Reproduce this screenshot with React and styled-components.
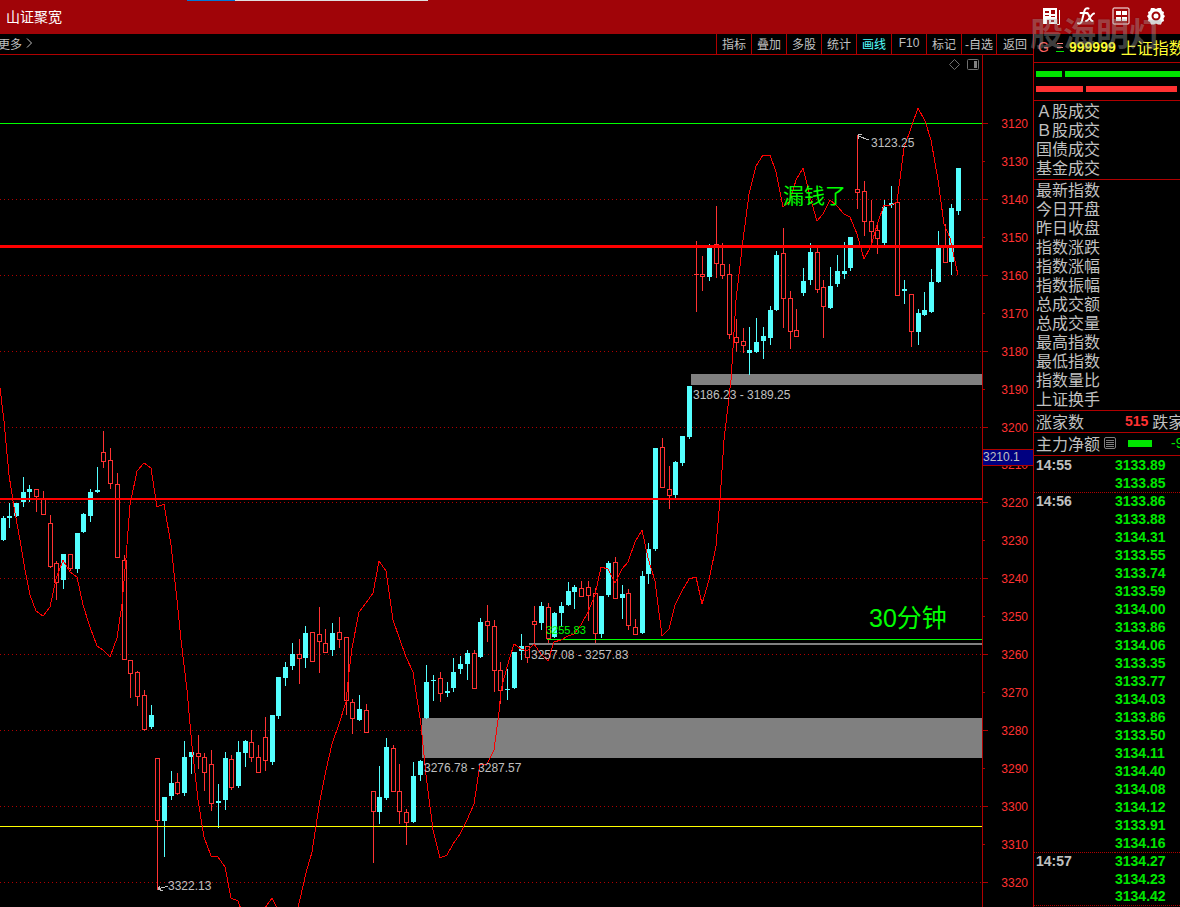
import React, { useState } from 'react';
import styled, { createGlobalStyle } from 'styled-components';

const tools = ['指标', '叠加', '多股', '统计', '画线', 'F10', '标记', '-自选', '返回'];

const volumeRows = ['Ａ股成交', 'Ｂ股成交', '国债成交', '基金成交'];

const indexRows = [
  '最新指数',
  '今日开盘',
  '昨日收盘',
  '指数涨跌',
  '指数涨幅',
  '指数振幅',
  '总成交额',
  '总成交量',
  '最高指数',
  '最低指数',
  '指数量比',
  '上证换手',
];

const ticks = [
  ['14:55', '3133.89'],
  ['', '3133.85'],
  ['14:56', '3133.86'],
  ['', '3133.88'],
  ['', '3134.31'],
  ['', '3133.55'],
  ['', '3133.74'],
  ['', '3133.59'],
  ['', '3134.00'],
  ['', '3133.86'],
  ['', '3134.06'],
  ['', '3133.35'],
  ['', '3133.77'],
  ['', '3134.03'],
  ['', '3133.86'],
  ['', '3133.50'],
  ['', '3134.11'],
  ['', '3134.40'],
  ['', '3134.08'],
  ['', '3134.12'],
  ['', '3133.91'],
  ['', '3134.16'],
  ['14:57', '3134.27'],
  ['', '3134.23'],
  ['', '3134.42'],
];

// [x, wick top, body top, body bottom, wick bottom, 1 = solid / 0 = hollow]
const candles = [
  [3, 516, 518, 540, 541, 1], [9, 503, 516, 518, 528, 1], [16, 503, 503, 516, 517, 1],
  [23, 477, 492, 502, 507, 1], [29, 485, 489, 492, 502, 1], [36, 489, 489, 497, 512, 0],
  [43, 491, 498, 515, 515, 0], [50, 515, 523, 567, 568, 0], [56, 561, 563, 583, 600, 0],
  [63, 554, 554, 580, 589, 1], [70, 554, 554, 569, 571, 0], [77, 533, 533, 569, 573, 1],
  [83, 513, 514, 532, 533, 1], [90, 489, 492, 516, 522, 1], [97, 467, 490, 492, 493, 1],
  [103, 431, 452, 462, 468, 0], [110, 448, 460, 484, 489, 0], [117, 473, 484, 558, 558, 0],
  [124, 555, 560, 660, 660, 0], [130, 660, 660, 674, 698, 0], [137, 671, 672, 697, 706, 0],
  [144, 690, 695, 730, 731, 0], [151, 705, 715, 727, 729, 1], [157, 758, 758, 821, 890, 0],
  [164, 797, 797, 821, 857, 1], [171, 771, 783, 796, 800, 1], [177, 773, 782, 794, 795, 0],
  [184, 741, 757, 793, 796, 1], [191, 752, 752, 757, 774, 1], [198, 735, 753, 757, 769, 0],
  [204, 753, 757, 773, 791, 0], [211, 750, 764, 804, 811, 0], [218, 784, 801, 803, 828, 1],
  [225, 752, 758, 800, 810, 1], [231, 755, 759, 788, 790, 0], [238, 741, 752, 786, 788, 1],
  [245, 740, 741, 753, 767, 1], [251, 730, 742, 758, 762, 0], [258, 745, 757, 773, 773, 0],
  [265, 717, 737, 761, 771, 0], [272, 715, 715, 762, 765, 1], [278, 677, 677, 716, 719, 1],
  [285, 662, 667, 678, 686, 1], [292, 643, 654, 666, 670, 1], [299, 639, 654, 659, 684, 0],
  [305, 626, 633, 658, 668, 1], [312, 632, 632, 662, 662, 0], [319, 607, 634, 642, 673, 0],
  [325, 629, 643, 653, 653, 0], [332, 623, 633, 650, 656, 1], [339, 617, 632, 640, 648, 0],
  [346, 637, 637, 701, 715, 0], [352, 699, 702, 719, 734, 0], [359, 695, 709, 720, 721, 1],
  [366, 704, 710, 733, 733, 0], [373, 791, 791, 812, 863, 0], [379, 766, 797, 812, 824, 1],
  [386, 738, 747, 798, 800, 1], [393, 745, 748, 792, 792, 0], [399, 764, 791, 812, 824, 0],
  [406, 809, 812, 823, 845, 0], [413, 762, 776, 822, 823, 1], [420, 760, 761, 775, 781, 1],
  [426, 665, 682, 718, 719, 1], [433, 675, 680, 681, 701, 1], [440, 672, 678, 694, 702, 0],
  [447, 682, 691, 693, 697, 1], [453, 658, 672, 688, 692, 1], [460, 656, 664, 669, 674, 1],
  [467, 650, 653, 664, 680, 1], [474, 650, 653, 689, 689, 0], [480, 618, 622, 657, 658, 1],
  [487, 605, 621, 626, 642, 0], [494, 620, 626, 671, 692, 0], [500, 662, 670, 691, 704, 0],
  [507, 669, 689, 690, 700, 1], [514, 652, 652, 688, 689, 1], [521, 634, 646, 651, 660, 1],
  [527, 646, 646, 658, 663, 0], [534, 606, 621, 625, 644, 0], [541, 602, 606, 623, 630, 1],
  [548, 603, 607, 639, 643, 0], [554, 612, 613, 637, 638, 1], [561, 602, 606, 613, 626, 1],
  [568, 582, 591, 605, 606, 1], [574, 585, 587, 592, 609, 1], [581, 581, 588, 597, 597, 0],
  [588, 581, 587, 596, 621, 0], [595, 588, 593, 634, 643, 0], [601, 596, 596, 634, 638, 1],
  [608, 561, 563, 595, 597, 1], [615, 557, 562, 599, 599, 0], [622, 585, 594, 598, 619, 1],
  [628, 589, 593, 626, 630, 0], [635, 619, 627, 635, 635, 0], [642, 571, 576, 633, 634, 1],
  [648, 543, 549, 574, 584, 1], [655, 448, 448, 549, 551, 1], [662, 438, 447, 488, 488, 0],
  [669, 466, 489, 496, 509, 0], [675, 461, 462, 495, 498, 1], [682, 436, 436, 463, 466, 1],
  [689, 386, 386, 437, 439, 1], [696, 241, 274, 275, 312, 0], [702, 256, 274, 277, 291, 0],
  [709, 244, 247, 277, 281, 1], [716, 206, 244, 264, 278, 0], [722, 243, 264, 276, 279, 0],
  [729, 264, 274, 335, 339, 0], [736, 319, 337, 343, 352, 0], [743, 328, 341, 346, 353, 0],
  [749, 327, 350, 353, 375, 1], [756, 318, 342, 352, 353, 1], [763, 327, 336, 341, 359, 1],
  [770, 306, 310, 338, 345, 1], [776, 251, 255, 310, 311, 1], [783, 228, 253, 299, 328, 0],
  [790, 291, 298, 332, 349, 0], [796, 309, 330, 337, 337, 0], [803, 268, 281, 293, 296, 1],
  [810, 243, 252, 280, 285, 1], [817, 248, 252, 290, 293, 0], [823, 280, 287, 307, 338, 0],
  [830, 267, 286, 308, 309, 1], [837, 255, 271, 284, 287, 1], [844, 242, 271, 274, 279, 1],
  [850, 237, 237, 268, 271, 1], [857, 135, 189, 193, 209, 0], [864, 181, 191, 222, 236, 0],
  [871, 200, 221, 232, 242, 0], [877, 223, 230, 239, 254, 0], [884, 200, 207, 243, 245, 1],
  [891, 186, 203, 205, 208, 1], [897, 202, 202, 296, 296, 0], [904, 280, 289, 291, 304, 1],
  [911, 294, 294, 332, 347, 0], [918, 309, 313, 332, 345, 1], [924, 292, 310, 315, 316, 1],
  [931, 269, 282, 312, 313, 1], [938, 231, 247, 282, 283, 1], [945, 224, 247, 263, 263, 0],
  [951, 204, 208, 262, 275, 1], [958, 168, 168, 211, 215, 1],
];

const indicator =
  '0,388 4,421 9,475 14,507 20,540 25,570 30,595 36,611 43,616 50,607 56,579 63,560 70,572 ' +
  '77,577 83,605 90,627 97,646 103,650 110,657 117,638 122,604 126,558 130,505 137,471 144,463 ' +
  '151,468 157,507 164,504 171,545 177,600 181,640 187,690 192,746 198,800 204,837 211,856 ' +
  '218,857 225,867 231,898 238,901 242,912 262,912 272,898 279,912 297,912 306,873 312,852 ' +
  '320,800 326,770 332,744 339,724 346,702 349,672 352,648 359,612 366,603 373,593 379,561 ' +
  '386,571 393,620 400,640 406,657 413,672 421,725 426,775 433,830 440,858 447,855 453,844 ' +
  '460,834 467,820 474,804 480,764 487,764 494,750 499,712 501,690 507,667 514,644 521,649 ' +
  '527,651 534,644 541,654 548,661 554,642 561,640 568,636 574,634 581,625 588,612 595,595 ' +
  '601,567 608,569 615,583 622,569 628,562 635,542 642,530 648,558 655,581 662,636 669,629 ' +
  '675,605 682,591 689,579 696,577 702,604 709,580 716,546 720,500 724,440 731,380 736,300 ' +
  '743,240 749,194 756,166 763,155 770,155 776,172 783,207 790,201 796,180 803,168 811,200 ' +
  '817,221 823,214 830,200 837,206 844,214 850,217 857,234 864,259 871,246 877,225 884,205 ' +
  '891,205 897,202 904,148 911,128 918,108 925,121 931,140 938,180 944,224 950,238 958,275';

const scale = Array.from({ length: 21 }, (_, i) => ({
  price: 3120 + i * 10,
  y: Math.round(123.4 + i * 37.95 - 0.5),
  major: i % 2 === 0,
}));

const Candle = ({ data }) => {
  const [x, high, top, bottom, low, solid] = data;
  const color = solid ? '#54ffff' : '#ff3232';
  const thin = bottom - top < 3;

  return (
    <g>
      <rect x={x} y={high} width="1" height={low - high} fill={color} />
      {solid || thin ? (
        <rect x={x - 2} y={top} width="5" height={bottom - top} fill={color} />
      ) : (
        <rect
          x={x - 1.5}
          y={top + 0.5}
          width="4"
          height={bottom - top - 1}
          fill="#000"
          stroke={color}
        />
      )}
    </g>
  );
};

const Chart = () => (
  <ChartSvg viewBox="0 55 1033 852" preserveAspectRatio="xMaxYMin slice">
    <g shapeRendering="crispEdges">
      {scale
        .filter(s => s.major && s.price > 3120)
        .map(s => (
          <line
            key={s.price}
            x1="0"
            x2="982"
            y1={s.y + 0.5}
            y2={s.y + 0.5}
            stroke="#b00000"
            strokeDasharray="1 3"
          />
        ))}

      <rect x="691" y="374" width="291" height="11" fill="#808080" />
      <rect x="422" y="718" width="560" height="40" fill="#808080" />

      {candles.map(c => (
        <Candle key={c[0]} data={c} />
      ))}

      <rect x="529" y="643" width="453" height="2" fill="#808080" />
      <rect x="547" y="639" width="435" height="1" fill="#00ff00" />
      <rect x="0" y="123" width="982" height="1" fill="#00ff00" />
      <rect x="0" y="245" width="982" height="3" fill="#ff0000" />
      <rect x="0" y="498" width="982" height="2" fill="#ff0000" />
      <rect x="0" y="826" width="982" height="1" fill="#ffff00" />
      <polyline points={indicator} fill="none" stroke="#ff0000" />

      <g stroke="#c0c0c0" fill="none">
        <path d="M869 140L858 136M862 134H858V139" />
        <path d="M168 886L158 889M160 886L158 889L163 891" />
      </g>
    </g>

    <Mark x="871" y="147">3123.25</Mark>
    <Mark x="168" y="890">3322.13</Mark>
    <Mark x="693" y="399">3186.23 - 3189.25</Mark>
    <Mark x="531" y="659">3257.08 - 3257.83</Mark>
    <Mark x="424" y="772">3276.78 - 3287.57</Mark>
    <Note x="546" y="634" $size={11}>3255.83</Note>
    <Note x="783" y="203" $size={21}>漏钱了</Note>
    <Note x="869" y="627" $size={25}>30分钟</Note>

    <g fill="none" stroke="#707070">
      <path d="M954.5 59.5L959.5 64.5L954.5 69.5L949.5 64.5Z" />
      <rect x="967.5" y="59.5" width="11" height="10" rx="1" />
      <rect x="974" y="61" width="3" height="7" fill="#808080" stroke="none" />
    </g>

    <g shapeRendering="crispEdges" fill="#b00000">
      <rect x="982" y="55" width="1" height="852" />
      {scale.map(s => (
        <rect key={s.price} x="983" y={s.y} width={s.major ? 5 : 2} height="1" />
      ))}
    </g>
    {scale.map(s => (
      <AxisLabel key={s.price} x="1028" y={s.y + 5}>
        {s.price}
      </AxisLabel>
    ))}
    <rect x="983" y="449" width="50" height="17" fill="#b00000" />
    <rect x="983" y="450" width="50" height="15" fill="#000080" />
    <Mark x="983" y="461">3210.1</Mark>
  </ChartSvg>
);

const SaveIcon = () => (
  <svg width="18" height="18" viewBox="0 0 18 18" fill="none">
    <path d="M1 1H15V17H1Z" fill="#fff" />
    <path d="M3 4H7V6H3ZM9 3H13V7H9ZM3 8H7V9H3ZM9 9H13V10H9ZM5 13H7V17H5ZM9 13H12V15H9Z" fill="#a00408" />
    <path d="M17.500 3V17.500H15" stroke="#fff" />
  </svg>
);

const GridIcon = () => (
  <svg width="18" height="18" viewBox="0 0 18 18" fill="none">
    <rect x="1" y="1" width="16" height="16" rx="1" stroke="#fff" />
    <path d="M4 4H9V8H4ZM10 4H15V8H10ZM4 10H9V14H4ZM10 10H15V14H10Z" fill="#fff" />
  </svg>
);

const FxIcon = () => (
  <svg width="18" height="18" viewBox="0 0 18 18" fill="none" stroke="#fff" strokeLinecap="round">
    <path d="M11.500 1.500C9.500 .8 8 1.500 7.400 4L5 13.500C4.500 15.800 3.200 17 1 16.200" strokeWidth="2" />
    <path d="M3.500 6H10.500" strokeWidth="2" />
    <path d="M10 6.500C12.500 6 12.500 14.500 15.500 14M17 6.500C14.500 6.500 12 14 9 14" strokeWidth="2" />
  </svg>
);

const GearIcon = () => (
  <svg width="18" height="18" viewBox="0 0 18 18" fill="none">
    <path
      fill="#fff"
      fillRule="evenodd"
      d="M4 1H7L9 2L11 1H14L15 4L17 5L16.500 7.500L18 9L16.500 11.500L17 14L15 15L14 17.500H11L9 16.500L7 17.500H4L3 15L1 14L1.500 11.500L0 9L1.500 7.500L1 5L3 4ZM9 4.500A4.500 4.500 0 1 0 9 13.500A4.500 4.500 0 1 0 9 4.500Z"
    />
    <circle cx="9" cy="9" r="2.500" fill="#fff" />
  </svg>
);

const ListIcon = () => (
  <svg width="12" height="12" viewBox="0 0 12 12" fill="none" stroke="#808080">
    <rect x=".5" y=".5" width="11" height="11" rx="1.500" />
    <path d="M2 3.500H10M2 5.500H10M2 7.500H10M2 9.500H10" />
  </svg>
);

const MenuIcon = () => (
  <svg width="8" height="10" viewBox="0 0 8 10" fill="none">
    <path d="M1 1.500H7M1 5.500H7" stroke="#ff8080" />
    <path d="M0 9.500H8" stroke="#00e600" />
  </svg>
);

const Sidebar = () => (
  <Aside>
    <Symbol>
      <Group>G</Group>
      <MenuIcon />
      <Code>999999</Code>
      <span>上证指数</span>
    </Symbol>
    <Strength>
      <Bars $color="#00e600">
        <Bar $width="26px" />
        <Bar />
      </Bars>
      <Bars $color="#ff3232" $inset="3px">
        <Bar $width="47px" />
        <Bar />
      </Bars>
    </Strength>
    <List>
      {volumeRows.map(row => (
        <li key={row}>{row}</li>
      ))}
    </List>
    <List>
      {indexRows.map(row => (
        <li key={row}>{row}</li>
      ))}
    </List>
    <Summary>
      <Label>涨家数</Label>
      <Count>515</Count>
      <span>跌家数</span>
    </Summary>
    <Summary>
      <span>主力净额</span>
      <ListIcon />
      <NetBar />
      <Net>-9</Net>
    </Summary>
    <TickTable>
      <tbody>
        {ticks.map(([time, price], i) => (
          <TickRow key={i} $divided={time !== '' && i > 0}>
            <Time>{time}</Time>
            <Price>{price}</Price>
          </TickRow>
        ))}
      </tbody>
    </TickTable>
  </Aside>
);

const App = () => {
  const [active, setActive] = useState('画线');

  return (
    <Page>
      <GlobalStyle />
      <Header>
        <Progress />
        <Broker>山证聚宽</Broker>
        <HeaderActions>
          <IconButton aria-label="保存">
            <SaveIcon />
          </IconButton>
          <IconButton aria-label="公式">
            <FxIcon />
          </IconButton>
          <IconButton aria-label="布局">
            <GridIcon />
          </IconButton>
          <IconButton aria-label="设置">
            <GearIcon />
          </IconButton>
        </HeaderActions>
        <Watermark>股海明灯</Watermark>
      </Header>
      <Body>
        <Main>
          <Toolbar>
            <MoreButton>
              更多
              <svg width="7" height="10" viewBox="0 0 7 10" fill="none" stroke="#c0c0c0">
                <path d="M1 .5L5.500 5L1 9.500" />
              </svg>
            </MoreButton>
            {tools.map(tool => (
              <Tool key={tool} $active={tool === active} onClick={() => setActive(tool)}>
                {tool}
              </Tool>
            ))}
          </Toolbar>
          <Chart />
        </Main>
        <Sidebar />
      </Body>
    </Page>
  );
};

const GlobalStyle = createGlobalStyle`
  * {
    box-sizing: border-box;
  }

  body {
    margin: 0;
    background: #000;
    color: #c0c0c0;
    font-family: 'Liberation Sans', 'Noto Sans CJK SC', sans-serif;
    font-size: 12px;
  }

  button {
    padding: 0;
    border: 0;
    background: none;
    color: inherit;
    font: inherit;
    cursor: pointer;
  }
`;

const Page = styled.div`
  display: flex;
  flex-direction: column;
  height: 100vh;
  overflow: hidden;
`;

const Header = styled.header`
  position: relative;
  display: flex;
  align-items: center;
  justify-content: space-between;
  flex: none;
  height: 34px;
  padding: 0 15px 2px 6px;
  background: #a00408;
`;

const Progress = styled.div`
  position: absolute;
  top: 0;
  left: 187px;
  width: 241px;
  height: 1px;
  background: linear-gradient(to right, #0078d7 48px, #e0e0e0 48px);
`;

const Broker = styled.span`
  color: #fff;
  font-size: 14px;
`;

const HeaderActions = styled.div`
  display: flex;
  gap: 17px;
`;

const IconButton = styled.button`
  display: flex;
`;

const Watermark = styled.div`
  position: absolute;
  top: 15px;
  right: 18px;
  z-index: 1;
  color: rgba(200, 200, 200, 0.32);
  font-size: 33px;
  font-weight: bold;
  line-height: 40px;
  text-shadow: 0 0 2px rgba(0, 0, 0, 0.15);
  white-space: nowrap;
  pointer-events: none;
`;

const Body = styled.div`
  display: flex;
  flex: 1;
  min-height: 0;
`;

const Main = styled.main`
  display: flex;
  flex: 1;
  flex-direction: column;
  min-width: 0;
`;

const Toolbar = styled.div`
  display: flex;
  flex: none;
  height: 21px;
  border-bottom: 1px solid #b00000;
`;

const MoreButton = styled.button`
  display: flex;
  align-items: center;
  gap: 4px;
  margin-right: auto;
  margin-left: -2px;
  padding-bottom: 2px;
`;

const Tool = styled.button`
  width: 35px;
  padding-bottom: 2px;
  border-left: 1px solid #b00000;
  color: ${props => (props.$active ? '#54ffff' : 'inherit')};
  white-space: nowrap;

  &:last-child {
    width: 37px;
  }
`;

const ChartSvg = styled.svg`
  display: block;
  flex: 1;
  width: 100%;
  min-height: 0;
`;

const Mark = styled.text`
  fill: #c0c0c0;
  font-size: 12px;
`;

const Note = styled.text`
  fill: #00ff00;
  font-size: ${props => props.$size}px;
`;

const AxisLabel = styled.text`
  fill: #ff3232;
  font-size: 12px;
  text-anchor: end;
`;

const Aside = styled.aside`
  flex: 0 0 147px;
  border-left: 1px solid #b00000;
  font-size: 16px;
  white-space: nowrap;
  overflow: hidden;
`;

const Section = styled.div`
  border-bottom: 1px solid #b00000;
  padding-left: 2px;
`;

const Symbol = styled(Section)`
  display: flex;
  align-items: center;
  height: 29px;
  padding-bottom: 2px;
  padding-left: 4px;
  color: #ffff32;

  > * {
    flex: none;
  }
`;

const Group = styled.span`
  width: 18px;
  color: #ff6464;
  font-size: 14px;
`;

const Code = styled.span`
  margin: 0 5px;
  font-size: 14px;
  font-weight: bold;
`;

const Strength = styled(Section)`
  display: flex;
  flex-direction: column;
  justify-content: center;
  gap: 9px;
  height: 38px;
`;

const Bars = styled.div`
  display: flex;
  gap: 3px;
  padding-right: ${props => props.$inset || 0};
  color: ${props => props.$color};
`;

const Bar = styled.div`
  flex: ${props => (props.$width ? `0 0 ${props.$width}` : 1)};
  height: 6px;
  background: currentColor;
`;

const List = styled.ul`
  margin: 0;
  padding: 1px 0 1px 2px;
  border-bottom: 1px solid #b00000;
  line-height: 19px;
  list-style: none;
`;

const Summary = styled(Section)`
  display: flex;
  align-items: center;
  gap: 4px;
  height: 22px;
  padding-bottom: 2px;

  > * {
    flex: none;
  }

  & + & {
    height: 23px;
  }
`;

const Label = styled.span`
  width: 85px;
`;

const Count = styled.strong`
  color: #ff3232;
  font-size: 14px;
`;

const NetBar = styled.div`
  width: 24px;
  height: 7px;
  margin: 0 15px 0 8px;
  background: #00e600;
`;

const Net = styled.span`
  color: #00e600;
  font-size: 14px;
`;

const TickTable = styled.table`
  width: 100%;
  border-spacing: 0;
  font-size: 14px;
  font-weight: bold;
`;

const TickRow = styled.tr`
  td {
    height: 18px;
    padding: 0;
    border-top: ${props => (props.$divided ? '1px dotted #b00000' : '0')};
    line-height: 17px;
  }

  &:last-child td {
    border-bottom: 1px dotted #b00000;
  }
`;

const Time = styled.td`
  width: 81px;
  text-indent: 2px;
`;

const Price = styled.td`
  color: #00e600;
`;

export default App;
